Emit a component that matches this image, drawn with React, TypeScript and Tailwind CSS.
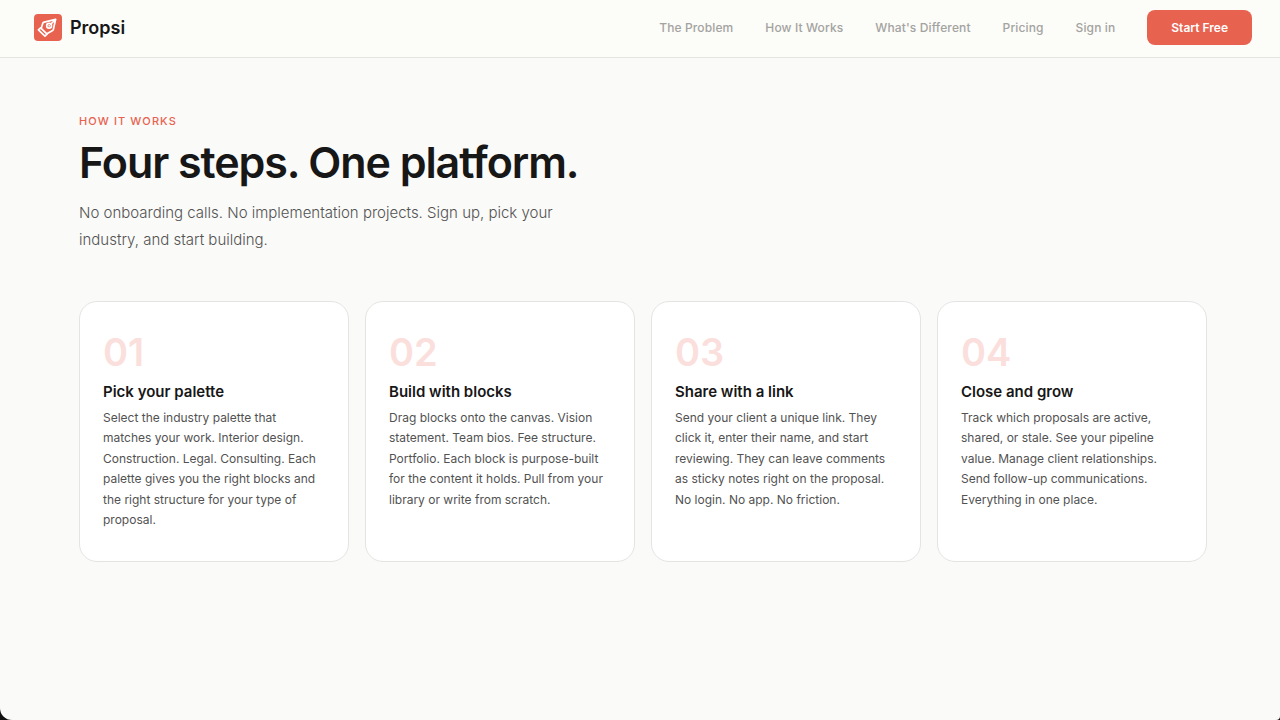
const NAV_LINKS = [
  { label: 'The Problem', href: '#problem' },
  { label: 'How It Works', href: '#how-it-works' },
  { label: "What's Different", href: '#different' },
  { label: 'Pricing', href: '#pricing' },
  { label: 'Sign in', href: '#sign-in' },
];

const STEPS = [
  {
    number: '01',
    title: 'Pick your palette',
    body: 'Select the industry palette that matches your work. Interior design. Construction. Legal. Consulting. Each palette gives you the right blocks and the right structure for your type of proposal.',
  },
  {
    number: '02',
    title: 'Build with blocks',
    body: 'Drag blocks onto the canvas. Vision statement. Team bios. Fee structure. Portfolio. Each block is purpose-built for the content it holds. Pull from your library or write from scratch.',
  },
  {
    number: '03',
    title: 'Share with a link',
    body: 'Send your client a unique link. They click it, enter their name, and start reviewing. They can leave comments as sticky notes right on the proposal. No login. No app. No friction.',
  },
  {
    number: '04',
    title: 'Close and grow',
    body: 'Track which proposals are active, shared, or stale. See your pipeline value. Manage client relationships. Send follow-up communications. Everything in one place.',
  },
];

// Fountain pen nib, tip pointing up and right
function LogoMark() {
  return (
    <svg
      viewBox="0 0 28 27"
      className="h-[27px] w-7 rounded bg-[#e86250] text-white"
      fill="none"
      stroke="currentColor"
      strokeWidth="1.7"
      strokeLinecap="round"
      strokeLinejoin="round"
      aria-hidden="true"
    >
      <path d="M4.4 15.9 6.6 13.8 13.1 20.1 10.9 22.2Z" />
      <path d="M7.2 14.2 8.8 9.2Q9.2 8.4 10.2 8.1L21.6 5.3 19.4 15.2Q19.1 16.3 18.2 16.8L12.9 19.8" />
      <path d="M21.4 5.6 16.9 10" />
      <circle cx="15.1" cy="11.8" r="2.4" />
      <path d="M15.1 11.8h.1" />
    </svg>
  );
}

function Navbar() {
  return (
    <header className="flex items-center justify-between border-b border-[#e4e4e1] bg-[#fcfcf9] pt-2.5 pr-7 pb-3 pl-[34px]">
      <a href="#top" className="flex items-center gap-2">
        <LogoMark />
        <span className="text-lg font-semibold text-[#171717]">Propsi</span>
      </a>
      <nav className="flex items-center gap-8">
        {NAV_LINKS.map((link) => (
          <a key={link.label} href={link.href} className="text-xs font-medium tracking-[0.01em] text-[#a3a3a0]">
            {link.label}
          </a>
        ))}
        <button type="button" className="h-[35px] rounded-lg bg-[#e86250] px-6 text-xs font-semibold text-white">
          Start Free
        </button>
      </nav>
    </header>
  );
}

function StepCard({ number, title, body }: { number: string; title: string; body: string }) {
  return (
    <li className="rounded-[18px] border border-[#e4e4e2] bg-white px-[23px] pt-7 pb-[31px]">
      <div className="text-[38px] leading-[44px] font-semibold text-[#fbdfdc]">{number}</div>
      <h3 className="mt-1.5 text-[15px] leading-6 font-semibold text-[#171717]">{title}</h3>
      <p className="mt-1 text-xs leading-[1.7] text-[#525252]">{body}</p>
    </li>
  );
}

export default function App() {
  return (
    <div className="min-h-screen bg-[#111111] font-['Inter',sans-serif]">
      <div className="min-h-screen rounded-br-sm rounded-bl-xl bg-[#fafaf8]">
        <Navbar />
        <main id="how-it-works" className="pt-[55px] pr-[73px] pb-14 pl-[79px]">
          <p className="text-[11px] leading-4 font-medium tracking-widest text-[#e86250] uppercase">How It Works</p>
          <h1 className="mt-2 text-[43px] leading-[50px] font-semibold tracking-tight text-[#171717]">
            Four steps. One platform.
          </h1>
          <p className="mt-3 max-w-[500px] text-[15px] leading-[27px] font-light text-[#525252]">
            No onboarding calls. No implementation projects. Sign up, pick your industry, and start building.
          </p>
          <ol className="mt-12 grid grid-cols-4 gap-4">
            {STEPS.map((step) => (
              <StepCard key={step.number} {...step} />
            ))}
          </ol>
        </main>
      </div>
    </div>
  );
}
